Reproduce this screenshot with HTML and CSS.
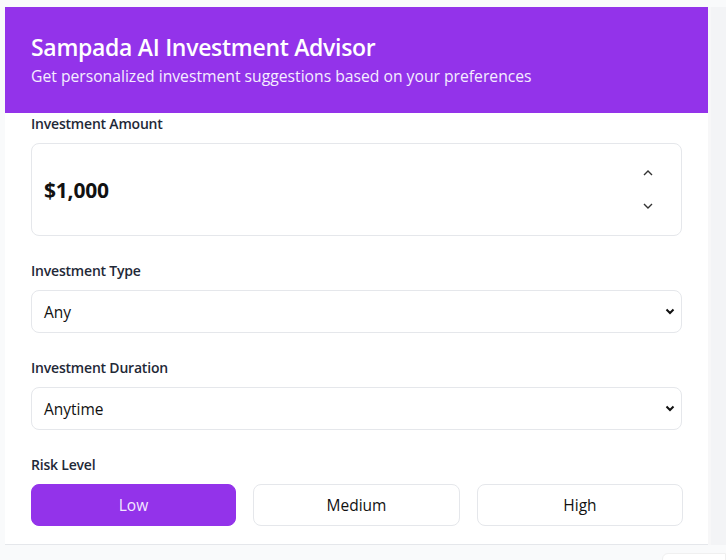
FILE: index.html
```html
<!DOCTYPE html>
<html>
<head>
<meta charset="utf-8">
<link rel="stylesheet" href="styles.css">
</head>
<body>
<div class="page">
  <div class="card">
    <header class="hero">
      <h1 class="title">Sampada AI Investment Advisor</h1>
      <p class="subtitle">Get personalized investment suggestions based on your preferences</p>
    </header>
    <div class="form">
      <div class="group">
        <div class="label">Investment Amount</div>
        <div class="amount">
          <span class="amount-value">$1,000</span>
          <span class="spinner">
            <svg width="12" height="8" viewBox="0 0 12 8"><path d="M2 6 L6 2 L10 6" fill="none" stroke="#333" stroke-width="1.4"/></svg>
            <svg width="12" height="8" viewBox="0 0 12 8"><path d="M2 2 L6 6 L10 2" fill="none" stroke="#333" stroke-width="1.4"/></svg>
          </span>
        </div>
      </div>
      <div class="group">
        <div class="label">Investment Type</div>
        <div class="select">
          <span>Any</span>
          <svg class="chev" width="10" height="7" viewBox="0 0 10 7"><path d="M1.5 1.5 L5 5 L8.5 1.5" fill="none" stroke="#111" stroke-width="2"/></svg>
        </div>
      </div>
      <div class="group">
        <div class="label">Investment Duration</div>
        <div class="select">
          <span>Anytime</span>
          <svg class="chev" width="10" height="7" viewBox="0 0 10 7"><path d="M1.5 1.5 L5 5 L8.5 1.5" fill="none" stroke="#111" stroke-width="2"/></svg>
        </div>
      </div>
      <div class="group">
        <div class="label">Risk Level</div>
        <div class="risk">
          <button class="risk-btn active">Low</button>
          <button class="risk-btn">Medium</button>
          <button class="risk-btn">High</button>
        </div>
      </div>
    </div>
  </div>
  <div class="track"></div>
</div>
<div class="footer">
  <div class="chip"></div>
</div>
</body>
</html>
```
FILE: styles.css
```css
* { box-sizing: border-box; }
html, body { margin: 0; padding: 0; }
body {
  background: #f9fafb;
  font-family: "Open Sans", "Noto Sans", sans-serif;
  color: #111827;
  width: 726px;
  height: 560px;
  overflow: hidden;
}
.page {
  display: flex;
  padding: 7px 0 0 5px;
}
.card {
  width: 703px;
  background: #fff;
  border-bottom: 1px solid #e5e7eb;
}
.track {
  flex: 1;
  background: #f3f4f6;
  border-left: 3px solid #f7f7f8;
}
.hero {
  background: #9333ea;
  height: 106px;
  padding: 26px 26px 0 26px;
  color: #fff;
}
.title {
  margin: 0;
  font-size: 23px;
  font-weight: 600;
  line-height: 28px;
  letter-spacing: -0.3px;
}
.subtitle {
  margin: 4px 0 0;
  font-size: 15.7px;
  line-height: 22px;
  color: #f5edff;
}
.form {
  padding: 0 26px 18px 26px;
  display: flex;
  flex-direction: column;
  gap: 25px;
}
.group { display: flex; flex-direction: column; }
.label {
  font-size: 14px;
  font-weight: 600;
  line-height: 20px;
  color: #1f2937;
  margin-bottom: 9px;
  letter-spacing: -0.2px;
}
.group:first-child .label { margin-top: 1px; }
.amount {
  height: 93px;
  border: 1px solid #e5e7eb;
  border-radius: 8px;
  display: flex;
  align-items: center;
  justify-content: space-between;
  padding: 0 27px 0 12px;
}
.amount-value {
  font-size: 21px;
  font-weight: 700;
  color: #111;
  letter-spacing: -0.2px;
}
.spinner {
  display: flex;
  flex-direction: column;
  gap: 25px;
}
.spinner svg { display: block; }
.select {
  height: 43px;
  border: 1px solid #e5e7eb;
  border-radius: 8px;
  display: flex;
  align-items: center;
  justify-content: space-between;
  padding: 0 6px 0 12px;
  font-size: 15.5px;
  color: #111;
}
.chev { display: block; }
.risk {
  display: grid;
  grid-template-columns: 205px 207px 206px;
  gap: 17px;
}
.risk-btn {
  height: 42px;
  border: 1px solid #e5e7eb;
  border-radius: 8px;
  background: #fff;
  font-family: inherit;
  font-size: 15.5px;
  color: #111;
  padding: 0;
}
.risk-btn.active {
  background: #9333ea;
  border-color: #9333ea;
  color: #f3e8ff;
}
.footer {
  display: flex;
  justify-content: flex-end;
  padding: 8px 0 0 0;
}
.chip {
  width: 64px;
  height: 20px;
  background: #fff;
  border: 1px solid #f0f0f0;
  border-radius: 6px 0 0 0;
}
```
